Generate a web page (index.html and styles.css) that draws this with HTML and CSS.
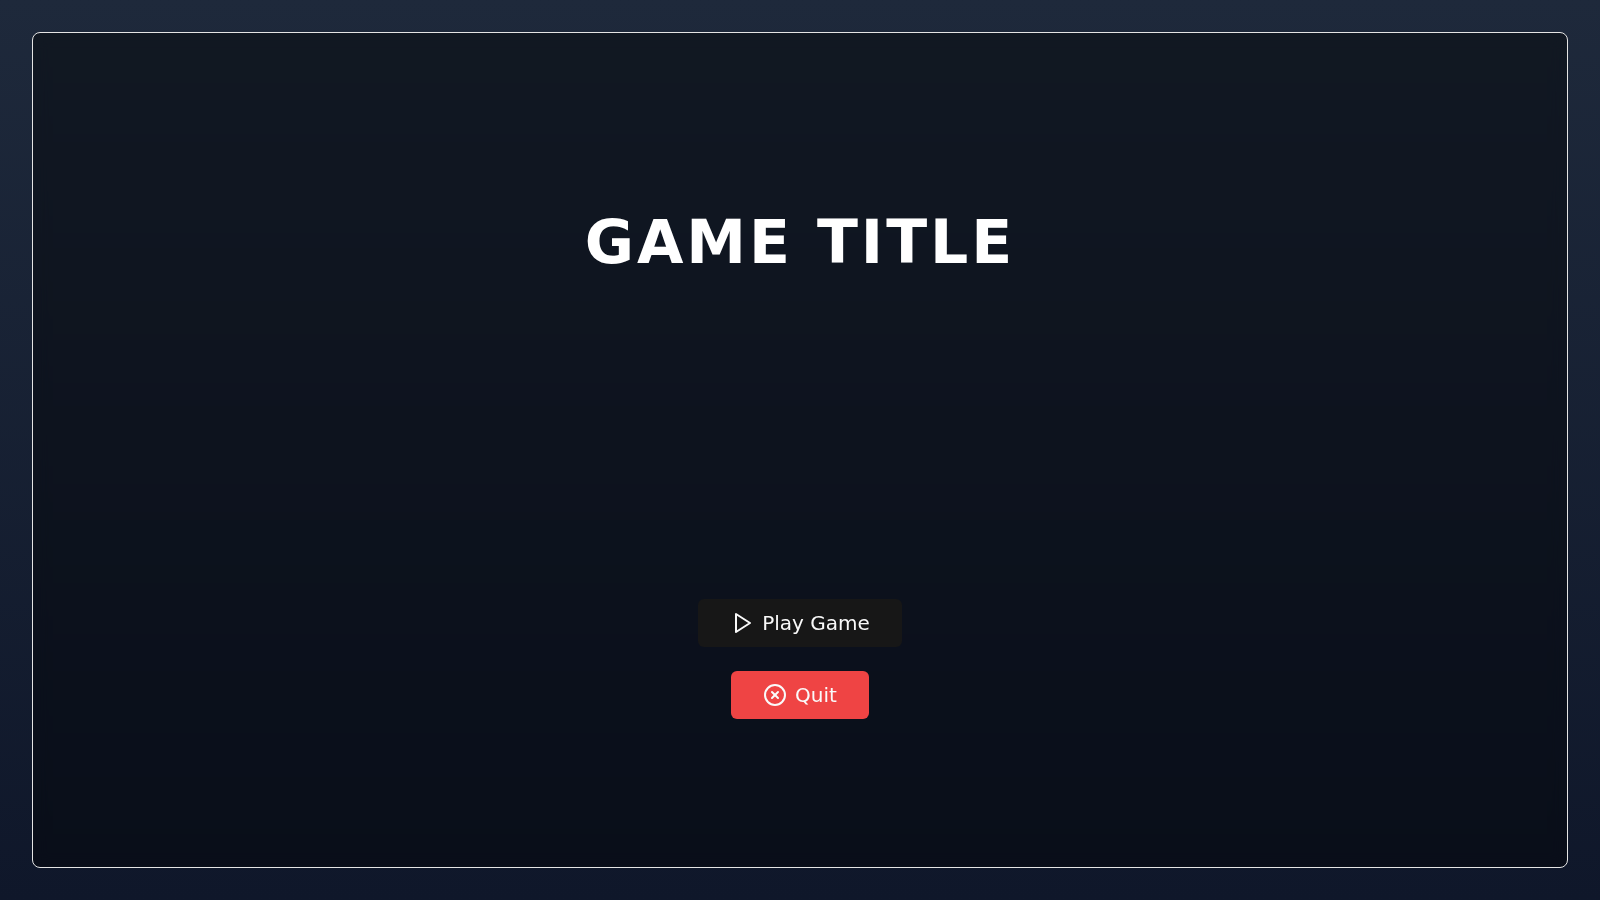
FILE: index.html
```html
<!DOCTYPE html>
<html lang="en">
<head>
<meta charset="utf-8">
<meta name="viewport" content="width=device-width, initial-scale=1">
<title>Game Title</title>
<link rel="stylesheet" href="styles.css">
</head>
<body>
<main class="screen">
  <div class="card">
    <div class="half">
      <h1 class="title">GAME TITLE</h1>
    </div>
    <div class="half">
      <button type="button" class="btn btn-primary">
        <svg class="icon" viewBox="0 0 24 24" aria-hidden="true"><polygon points="6 3 20 12 6 21 6 3"/></svg>
        Play Game
      </button>
      <button type="button" class="btn btn-danger">
        <svg class="icon" viewBox="0 0 24 24" aria-hidden="true"><circle cx="12" cy="12" r="10"/><path d="m15 9-6 6"/><path d="m9 9 6 6"/></svg>
        Quit
      </button>
    </div>
  </div>
</main>
</body>
</html>
```
FILE: styles.css
```css
*, *::before, *::after { box-sizing: border-box; }

body {
  margin: 0;
  font-family: "DejaVu Sans", sans-serif;
  color: #fff;
}

.screen {
  display: flex;
  min-height: 100vh;
  padding: 32px;
  background: linear-gradient(to bottom, #1e293b, #0f172a);
}

.card {
  flex: 1;
  display: flex;
  flex-direction: column;
  border: 1px solid #e5e5e5;
  border-radius: 8px;
  background: rgba(0, 0, 0, 0.4);
  backdrop-filter: blur(8px);
}

.half {
  flex: 1 0 0;
  display: flex;
  flex-direction: column;
  align-items: center;
  justify-content: center;
  gap: 24px;
}

.title {
  margin: 0;
  font-size: 60px;
  line-height: 60px;
  font-weight: 700;
  letter-spacing: 3px;
}

.btn {
  display: inline-flex;
  align-items: center;
  justify-content: center;
  gap: 8px;
  height: 48px;
  padding: 0 32px;
  border: 0;
  border-radius: 6px;
  font: inherit;
  font-size: 20px;
  line-height: 28px;
  color: #fafafa;
  cursor: pointer;
}

.btn-primary { background: #171717; }
.btn-danger { background: #ef4444; }

.icon {
  width: 24px;
  height: 24px;
  fill: none;
  stroke: currentColor;
  stroke-width: 2;
  stroke-linecap: round;
  stroke-linejoin: round;
}
```
